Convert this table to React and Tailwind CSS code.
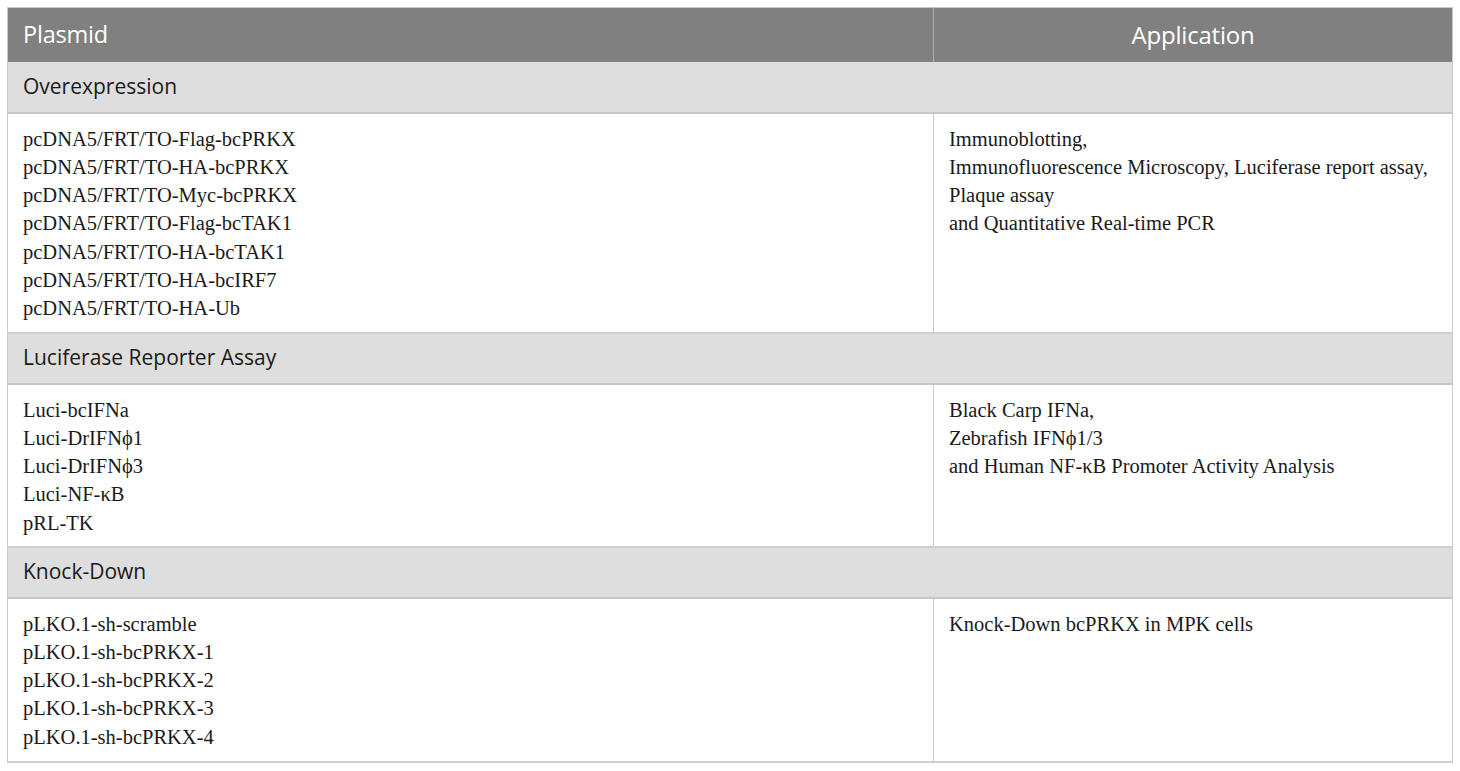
import React from 'react';

const sections = [
  {
    title: 'Overexpression',
    plasmids: [
      'pcDNA5/FRT/TO-Flag-bcPRKX',
      'pcDNA5/FRT/TO-HA-bcPRKX',
      'pcDNA5/FRT/TO-Myc-bcPRKX',
      'pcDNA5/FRT/TO-Flag-bcTAK1',
      'pcDNA5/FRT/TO-HA-bcTAK1',
      'pcDNA5/FRT/TO-HA-bcIRF7',
      'pcDNA5/FRT/TO-HA-Ub',
    ],
    application: [
      'Immunoblotting,',
      'Immunofluorescence Microscopy, Luciferase report assay,',
      'Plaque assay',
      'and Quantitative Real-time PCR',
    ],
    height: 'h-[220px]',
  },
  {
    title: 'Luciferase Reporter Assay',
    plasmids: ['Luci-bcIFNa', 'Luci-DrIFNϕ1', 'Luci-DrIFNϕ3', 'Luci-NF-κB', 'pRL-TK'],
    application: ['Black Carp IFNa,', 'Zebrafish IFNϕ1/3', 'and Human NF-κB Promoter Activity Analysis'],
    height: 'h-[163px]',
  },
  {
    title: 'Knock-Down',
    plasmids: [
      'pLKO.1-sh-scramble',
      'pLKO.1-sh-bcPRKX-1',
      'pLKO.1-sh-bcPRKX-2',
      'pLKO.1-sh-bcPRKX-3',
      'pLKO.1-sh-bcPRKX-4',
    ],
    application: ['Knock-Down bcPRKX in MPK cells'],
    height: 'h-[164px]',
  },
];

const sans = "font-['Open_Sans','Noto_Sans',sans-serif]";
const serif = "font-['Liberation_Serif','Times_New_Roman',serif]";

export default function App() {
  return (
    <div className="min-h-screen bg-white pt-[7px] pl-[7px]">
      <table className="w-[1446px] border-collapse border border-[#c8c8c8]">
        <thead>
          <tr className="h-[54px] bg-[#7f807f] text-white">
            <th className={`${sans} w-[926px] border-r border-[#b0b0b0] px-[15px] text-left text-[23.5px] font-normal tracking-[-0.2px]`}>
              Plasmid
            </th>
            <th className={`${sans} px-[15px] text-center text-[24px] font-normal tracking-[-0.2px]`}>Application</th>
          </tr>
        </thead>
        <tbody>
          {sections.map((s) => (
            <React.Fragment key={s.title}>
              <tr className="h-[51px] bg-[#dedede] border-b-2 border-[#c6c6c6]">
                <td colSpan={2} className={`${sans} px-[15px] text-[21px] text-[#1a1a1a]`}>
                  {s.title}
                </td>
              </tr>
              <tr className={`${s.height} border-b-2 border-[#cfcfcf] align-top`}>
                <td className={`${serif} border-r border-[#c8c8c8] px-[15px] pt-[11px] text-[20.5px] leading-[28.3px] text-[#1a1a1a]`}>
                  {s.plasmids.map((p) => (
                    <div key={p}>{p}</div>
                  ))}
                </td>
                <td className={`${serif} px-[15px] pt-[11px] text-[20.5px] leading-[28.3px] text-[#1a1a1a]`}>
                  {s.application.map((a) => (
                    <div key={a}>{a}</div>
                  ))}
                </td>
              </tr>
            </React.Fragment>
          ))}
        </tbody>
      </table>
    </div>
  );
}
